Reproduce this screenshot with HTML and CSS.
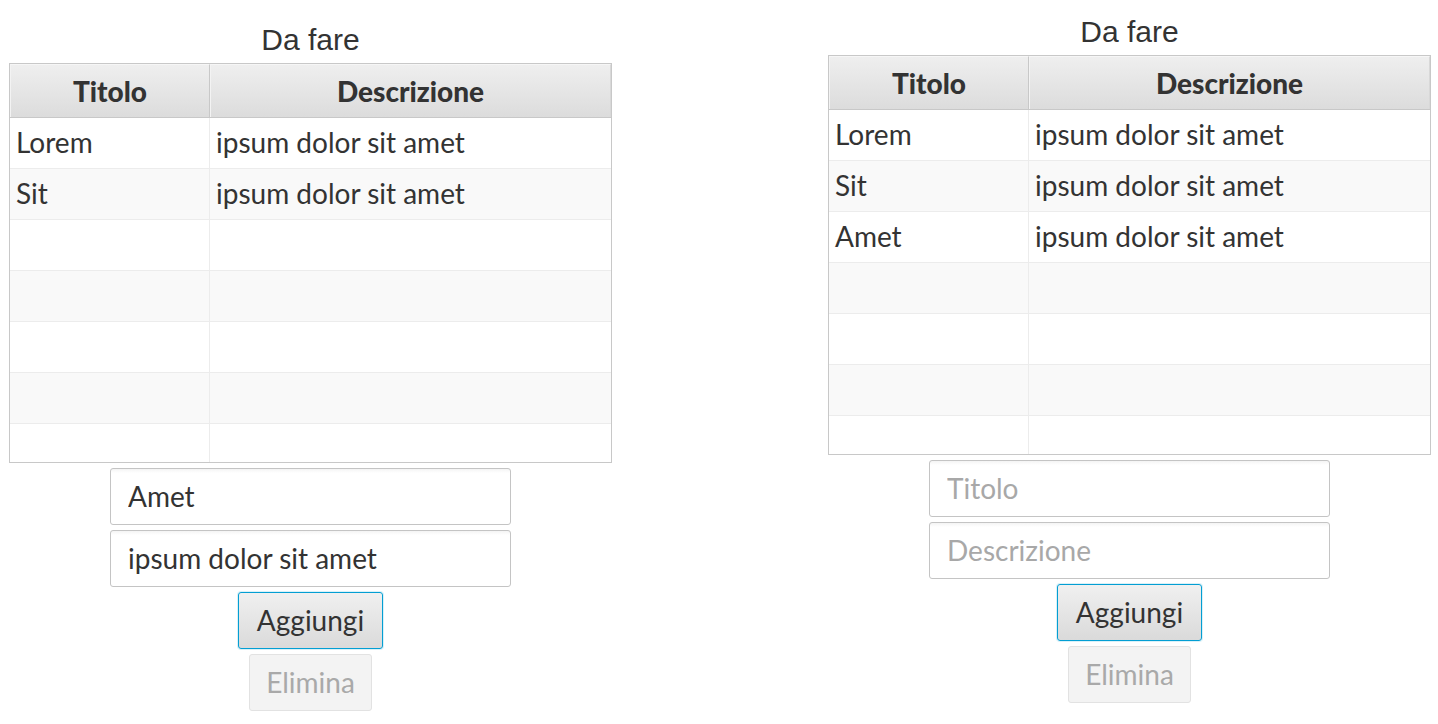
FILE: index.html
```html
<!DOCTYPE html>
<html lang="it">
<head>
<meta charset="utf-8">
<title>Da fare</title>
<link rel="stylesheet" href="styles.css">
</head>
<body>
<div class="app">
  <section class="panel panel-left">
    <h1 class="title">Da fare</h1>
    <div class="table">
      <div class="thead">
        <div class="th th-first">Titolo</div>
        <div class="th">Descrizione</div>
      </div>
      <div class="tbody">
        <div class="tr"><div class="td td-first">Lorem</div><div class="td">ipsum dolor sit amet</div></div>
        <div class="tr"><div class="td td-first">Sit</div><div class="td">ipsum dolor sit amet</div></div>
        <div class="tr"><div class="td td-first"></div><div class="td"></div></div>
        <div class="tr"><div class="td td-first"></div><div class="td"></div></div>
        <div class="tr"><div class="td td-first"></div><div class="td"></div></div>
        <div class="tr"><div class="td td-first"></div><div class="td"></div></div>
        <div class="tr"><div class="td td-first"></div><div class="td"></div></div>
      </div>
    </div>
    <div class="form">
      <input class="field" type="text" value="Amet" placeholder="Titolo">
      <input class="field" type="text" value="ipsum dolor sit amet" placeholder="Descrizione">
      <button class="btn btn-focus" type="button">Aggiungi</button>
      <button class="btn" type="button" disabled>Elimina</button>
    </div>
  </section>
  <section class="panel panel-right">
    <h1 class="title">Da fare</h1>
    <div class="table">
      <div class="thead">
        <div class="th th-first">Titolo</div>
        <div class="th">Descrizione</div>
      </div>
      <div class="tbody">
        <div class="tr"><div class="td td-first">Lorem</div><div class="td">ipsum dolor sit amet</div></div>
        <div class="tr"><div class="td td-first">Sit</div><div class="td">ipsum dolor sit amet</div></div>
        <div class="tr"><div class="td td-first">Amet</div><div class="td">ipsum dolor sit amet</div></div>
        <div class="tr"><div class="td td-first"></div><div class="td"></div></div>
        <div class="tr"><div class="td td-first"></div><div class="td"></div></div>
        <div class="tr"><div class="td td-first"></div><div class="td"></div></div>
        <div class="tr"><div class="td td-first"></div><div class="td"></div></div>
      </div>
    </div>
    <div class="form">
      <input class="field" type="text" placeholder="Titolo">
      <input class="field" type="text" placeholder="Descrizione">
      <button class="btn btn-focus" type="button">Aggiungi</button>
      <button class="btn" type="button" disabled>Elimina</button>
    </div>
  </section>
</div>
</body>
</html>
```
FILE: styles.css
```css
* { box-sizing: border-box; }

html, body {
  margin: 0;
  padding: 0;
  background: #ffffff;
}

body {
  font-family: "Lato", "Open Sans", sans-serif;
  color: #333333;
}

.app {
  display: flex;
  align-items: flex-start;
  gap: 216px;
  padding-left: 9px;
}

.panel {
  width: 603px;
  display: flex;
  flex-direction: column;
  align-items: center;
}

.panel-left { padding-top: 23px; }
.panel-right { padding-top: 15px; }

.title {
  margin: 0 0 6px;
  font-family: "Liberation Sans", Arial, sans-serif;
  font-weight: normal;
  font-size: 30px;
  line-height: 34px;
  color: #333333;
}

.table {
  width: 603px;
  border: 1px solid #c8c8c8;
  background: #ffffff;
}

.thead {
  display: grid;
  grid-template-columns: 200px 1fr;
  height: 54px;
  border-bottom: 1px solid #c8c8c8;
  background: linear-gradient(to bottom, #efefef 0%, #dcdcdc 100%);
}

.th {
  display: flex;
  align-items: center;
  justify-content: center;
  font-weight: 900;
  font-size: 28px;
  color: #333333;
  border-left: 1px solid #f3f3f3;
  border-top: 1px solid #f6f6f6;
  border-right: 1px solid #c8c8c8;
}

.th:last-child { border-right: 1px solid #d8d8d8; }

.tbody {
  height: 344px;
  overflow: hidden;
}

.tr {
  display: grid;
  grid-template-columns: 200px 1fr;
  height: 51px;
  border-bottom: 1px solid #ececec;
  background: #ffffff;
}

.tr:nth-child(even) { background: #f9f9f9; }

.td {
  display: flex;
  align-items: center;
  padding: 0 6px 2px;
  font-size: 28px;
  color: #333333;
  white-space: nowrap;
}

.td-first { border-right: 1px solid #ececec; }

.form {
  margin-top: 5px;
  display: flex;
  flex-direction: column;
  align-items: center;
  gap: 5px;
}

.field {
  width: 401px;
  height: 57px;
  margin: 0;
  padding: 0 17px 2px;
  border: 1px solid #c4c4c4;
  border-radius: 3px;
  background: linear-gradient(to bottom, #f4f4f4 0px, #ffffff 4px, #ffffff 100%);
  font-family: "Lato", "Open Sans", sans-serif;
  font-size: 28px;
  color: #333333;
  outline: none;
}

.field::placeholder { color: #a8a8a8; }

.btn {
  height: 57px;
  margin: 0;
  padding: 0 18px 2px;
  border: 1px solid #c2c2c2;
  border-radius: 3px;
  background: linear-gradient(to bottom, #f0f0f0 0%, #dadada 100%);
  font-family: "Lato", "Open Sans", sans-serif;
  font-size: 28px;
  color: #333333;
}

.btn-focus {
  border-color: #039ed3;
  box-shadow: 0 0 0 1px rgba(3, 158, 211, 0.15);
}

.btn:disabled {
  padding: 0 16px 2px;
  background: #f3f3f3;
  border-color: #e2e2e2;
  color: #a9a9a9;
}
```
